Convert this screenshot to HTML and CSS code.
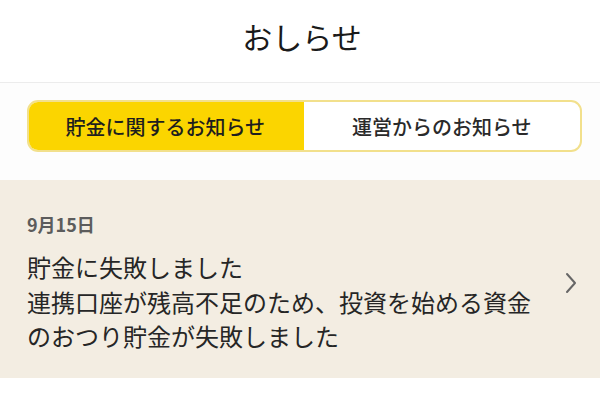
FILE: index.html
```html
<!DOCTYPE html>
<html lang="ja">
<head>
<meta charset="utf-8">
<title>おしらせ</title>
<link rel="stylesheet" href="styles.css">
</head>
<body>
  <header class="header">
    <h1 class="title">おしらせ</h1>
  </header>
  <section class="tabs-area">
    <div class="tabs">
      <div class="tab tab-active">貯金に関するお知らせ</div>
      <div class="tab">運営からのお知らせ</div>
    </div>
  </section>
  <a class="item" href="#">
    <div class="item-body">
      <div class="item-date">9月15日</div>
      <p class="item-text">貯金に失敗しました<br>連携口座が残高不足のため、投資を始める資金<br>のおつり貯金が失敗しました</p>
    </div>
    <svg class="chevron" width="14" height="22" viewBox="0 0 14 22">
      <path d="M2 2 L10 11 L2 20" fill="none" stroke="#666" stroke-width="2" stroke-linecap="round" stroke-linejoin="round"/>
    </svg>
  </a>
</body>
</html>
```

FILE: styles.css
```css
* { box-sizing: border-box; }
html, body {
  margin: 0;
  padding: 0;
  background: #ffffff;
  font-family: "Noto Sans CJK JP", "Noto Sans", sans-serif;
  color: #222;
}
.header {
  height: 83px;
  display: flex;
  align-items: center;
  justify-content: center;
  border-bottom: 1px solid #ececec;
  padding-bottom: 10px;
}
.title {
  margin: 0;
  font-size: 30px;
  font-weight: 400;
  line-height: 40px;
  color: #1a1a1a;
  padding-left: 4px;
}
.tabs-area {
  background: #fdfdfd;
  padding: 17px 18px 28px 27px;
}
.tabs {
  display: flex;
  height: 52px;
  border: 2px solid #f2e08c;
  border-radius: 11px;
  overflow: hidden;
  background: #fff;
}
.tab {
  flex: 1;
  display: flex;
  align-items: center;
  justify-content: center;
  font-size: 20px;
  font-weight: 500;
  color: #2a2a2a;
}
.tab-active {
  background: #fbd500;
  margin: -2px 0 -2px -2px;
  color: #1e1e1e;
}
.item {
  display: flex;
  align-items: center;
  background: #f3ede2;
  padding: 32px 21px 24px 27px;
  text-decoration: none;
  color: #2a2a2a;
  box-shadow: 0 2px 3px rgba(0, 0, 0, 0.06);
}
.item-body {
  flex: 1;
}
.item-date {
  font-size: 18px;
  font-weight: 700;
  line-height: 24px;
  color: #5c5c5c;
  margin-bottom: 14px;
}
.item-text {
  margin: 0;
  font-size: 24px;
  line-height: 34.5px;
  font-weight: 400;
  color: #262626;
}
.chevron {
  flex: none;
}
```
